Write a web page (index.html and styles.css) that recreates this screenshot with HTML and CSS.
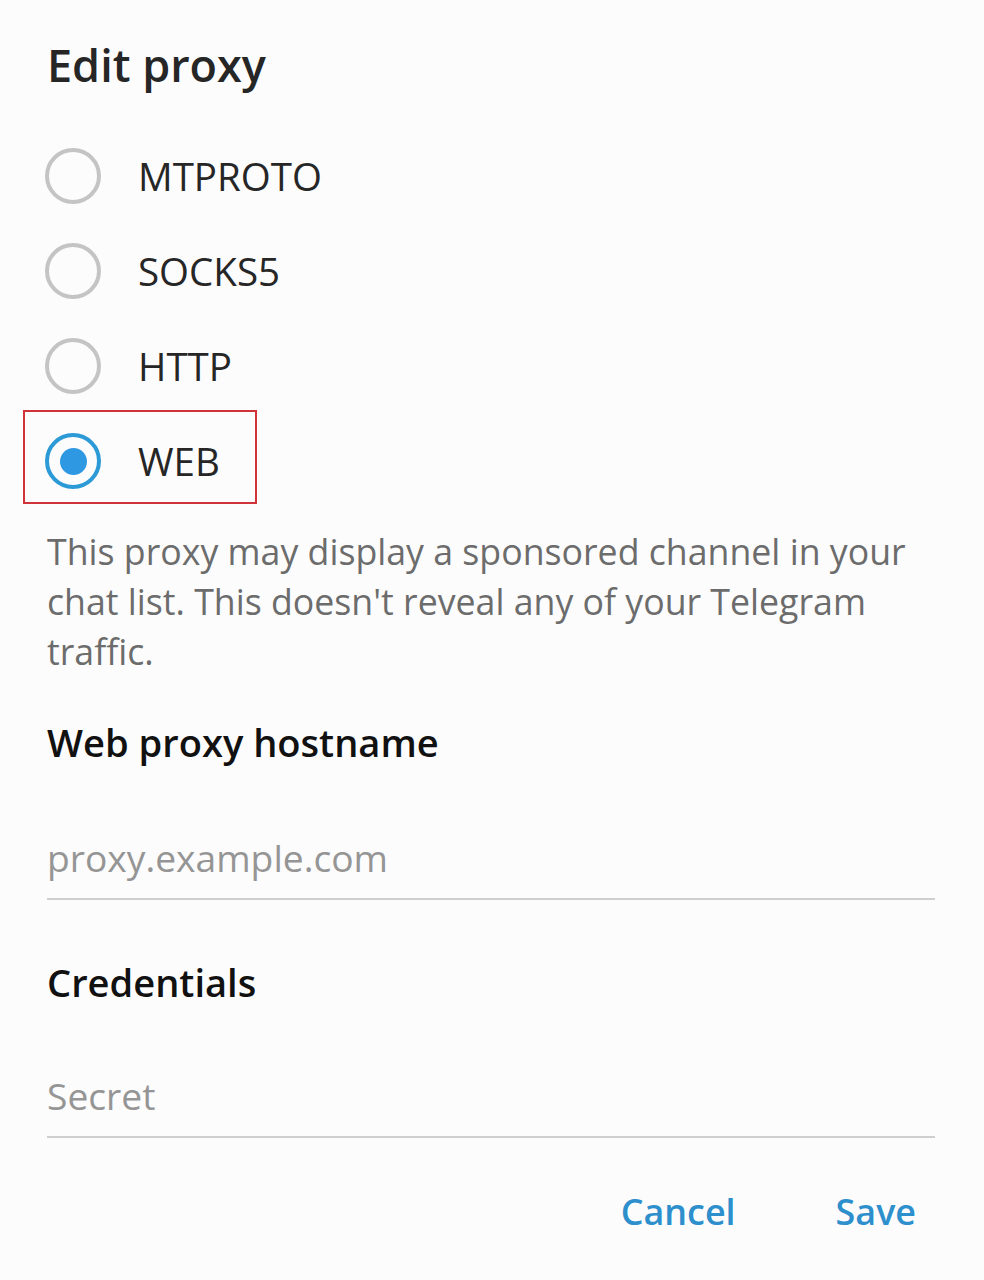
FILE: index.html
```html
<!DOCTYPE html>
<html>
<head>
<meta charset="utf-8">
<link rel="stylesheet" href="styles.css">
</head>
<body>
<div class="dialog">
  <h1 class="title">Edit proxy</h1>
  <div class="options">
    <div class="option"><span class="radio"></span><span class="label">MTPROTO</span></div>
    <div class="option"><span class="radio"></span><span class="label">SOCKS5</span></div>
    <div class="option"><span class="radio"></span><span class="label">HTTP</span></div>
    <div class="option">
      <div class="highlight"></div>
      <span class="radio checked"><span class="dot"></span></span><span class="label">WEB</span>
    </div>
  </div>
  <p class="note">This proxy may display a sponsored channel in your chat list. This doesn't reveal any of your Telegram traffic.</p>
  <h2 class="section">Web proxy hostname</h2>
  <div class="field"><span class="placeholder">proxy.example.com</span></div>
  <h2 class="section cred">Credentials</h2>
  <div class="field secret"><span class="placeholder">Secret</span></div>
  <div class="actions">
    <span class="btn">Cancel</span>
    <span class="btn">Save</span>
  </div>
</div>
</body>
</html>
```
FILE: styles.css
```css
html, body {
  margin: 0;
  padding: 0;
  background: #fcfcfc;
}
body {
  font-family: "Open Sans", "Noto Sans", sans-serif;
  color: #222;
}
.dialog {
  padding: 30px 49px 0 47px;
}
.title {
  margin: 0;
  font-size: 45px;
  font-weight: 600;
  color: #262626;
  line-height: 70px;
}
.options {
  margin-top: 48px;
  display: flex;
  flex-direction: column;
  gap: 39px;
}
.option {
  display: flex;
  align-items: center;
  height: 56px;
  position: relative;
}
.radio {
  width: 48px;
  height: 48px;
  border: 4px solid #c4c4c4;
  border-radius: 50%;
  display: flex;
  align-items: center;
  justify-content: center;
  flex: none;
  margin-left: -2px;
}
.radio.checked {
  border-color: #2b9ad6;
}
.dot {
  width: 27px;
  height: 27px;
  border-radius: 50%;
  background: #2f98e2;
}
.label {
  margin-left: 37px;
  font-size: 38.5px;
  color: #262626;
  line-height: 50px;
}
.highlight {
  position: absolute;
  box-sizing: border-box;
  left: -24px;
  top: -23px;
  width: 234px;
  height: 94px;
  border: 2px solid #d0343a;
}
.note {
  margin: 37px 0 0;
  font-size: 35.7px;
  line-height: 50px;
  color: #6c6c6c;
}
.section {
  margin: 41px 0 0;
  font-size: 38.1px;
  font-weight: 600;
  color: #111;
  line-height: 50px;
}
.field {
  margin-top: 66px;
  border-bottom: 2px solid #cfcfcf;
  padding-bottom: 15px;
}
.placeholder {
  display: block;
  font-size: 37.2px;
  color: #959595;
  line-height: 50px;
}
.cred {
  margin-top: 57px;
}
.secret {
  margin-top: 64px;
}
.actions {
  display: flex;
  justify-content: flex-end;
  gap: 100px;
  padding-right: 19px;
  margin-top: 49px;
}
.btn {
  font-size: 35.9px;
  font-weight: 600;
  color: #2d8fcc;
  line-height: 50px;
}
```
